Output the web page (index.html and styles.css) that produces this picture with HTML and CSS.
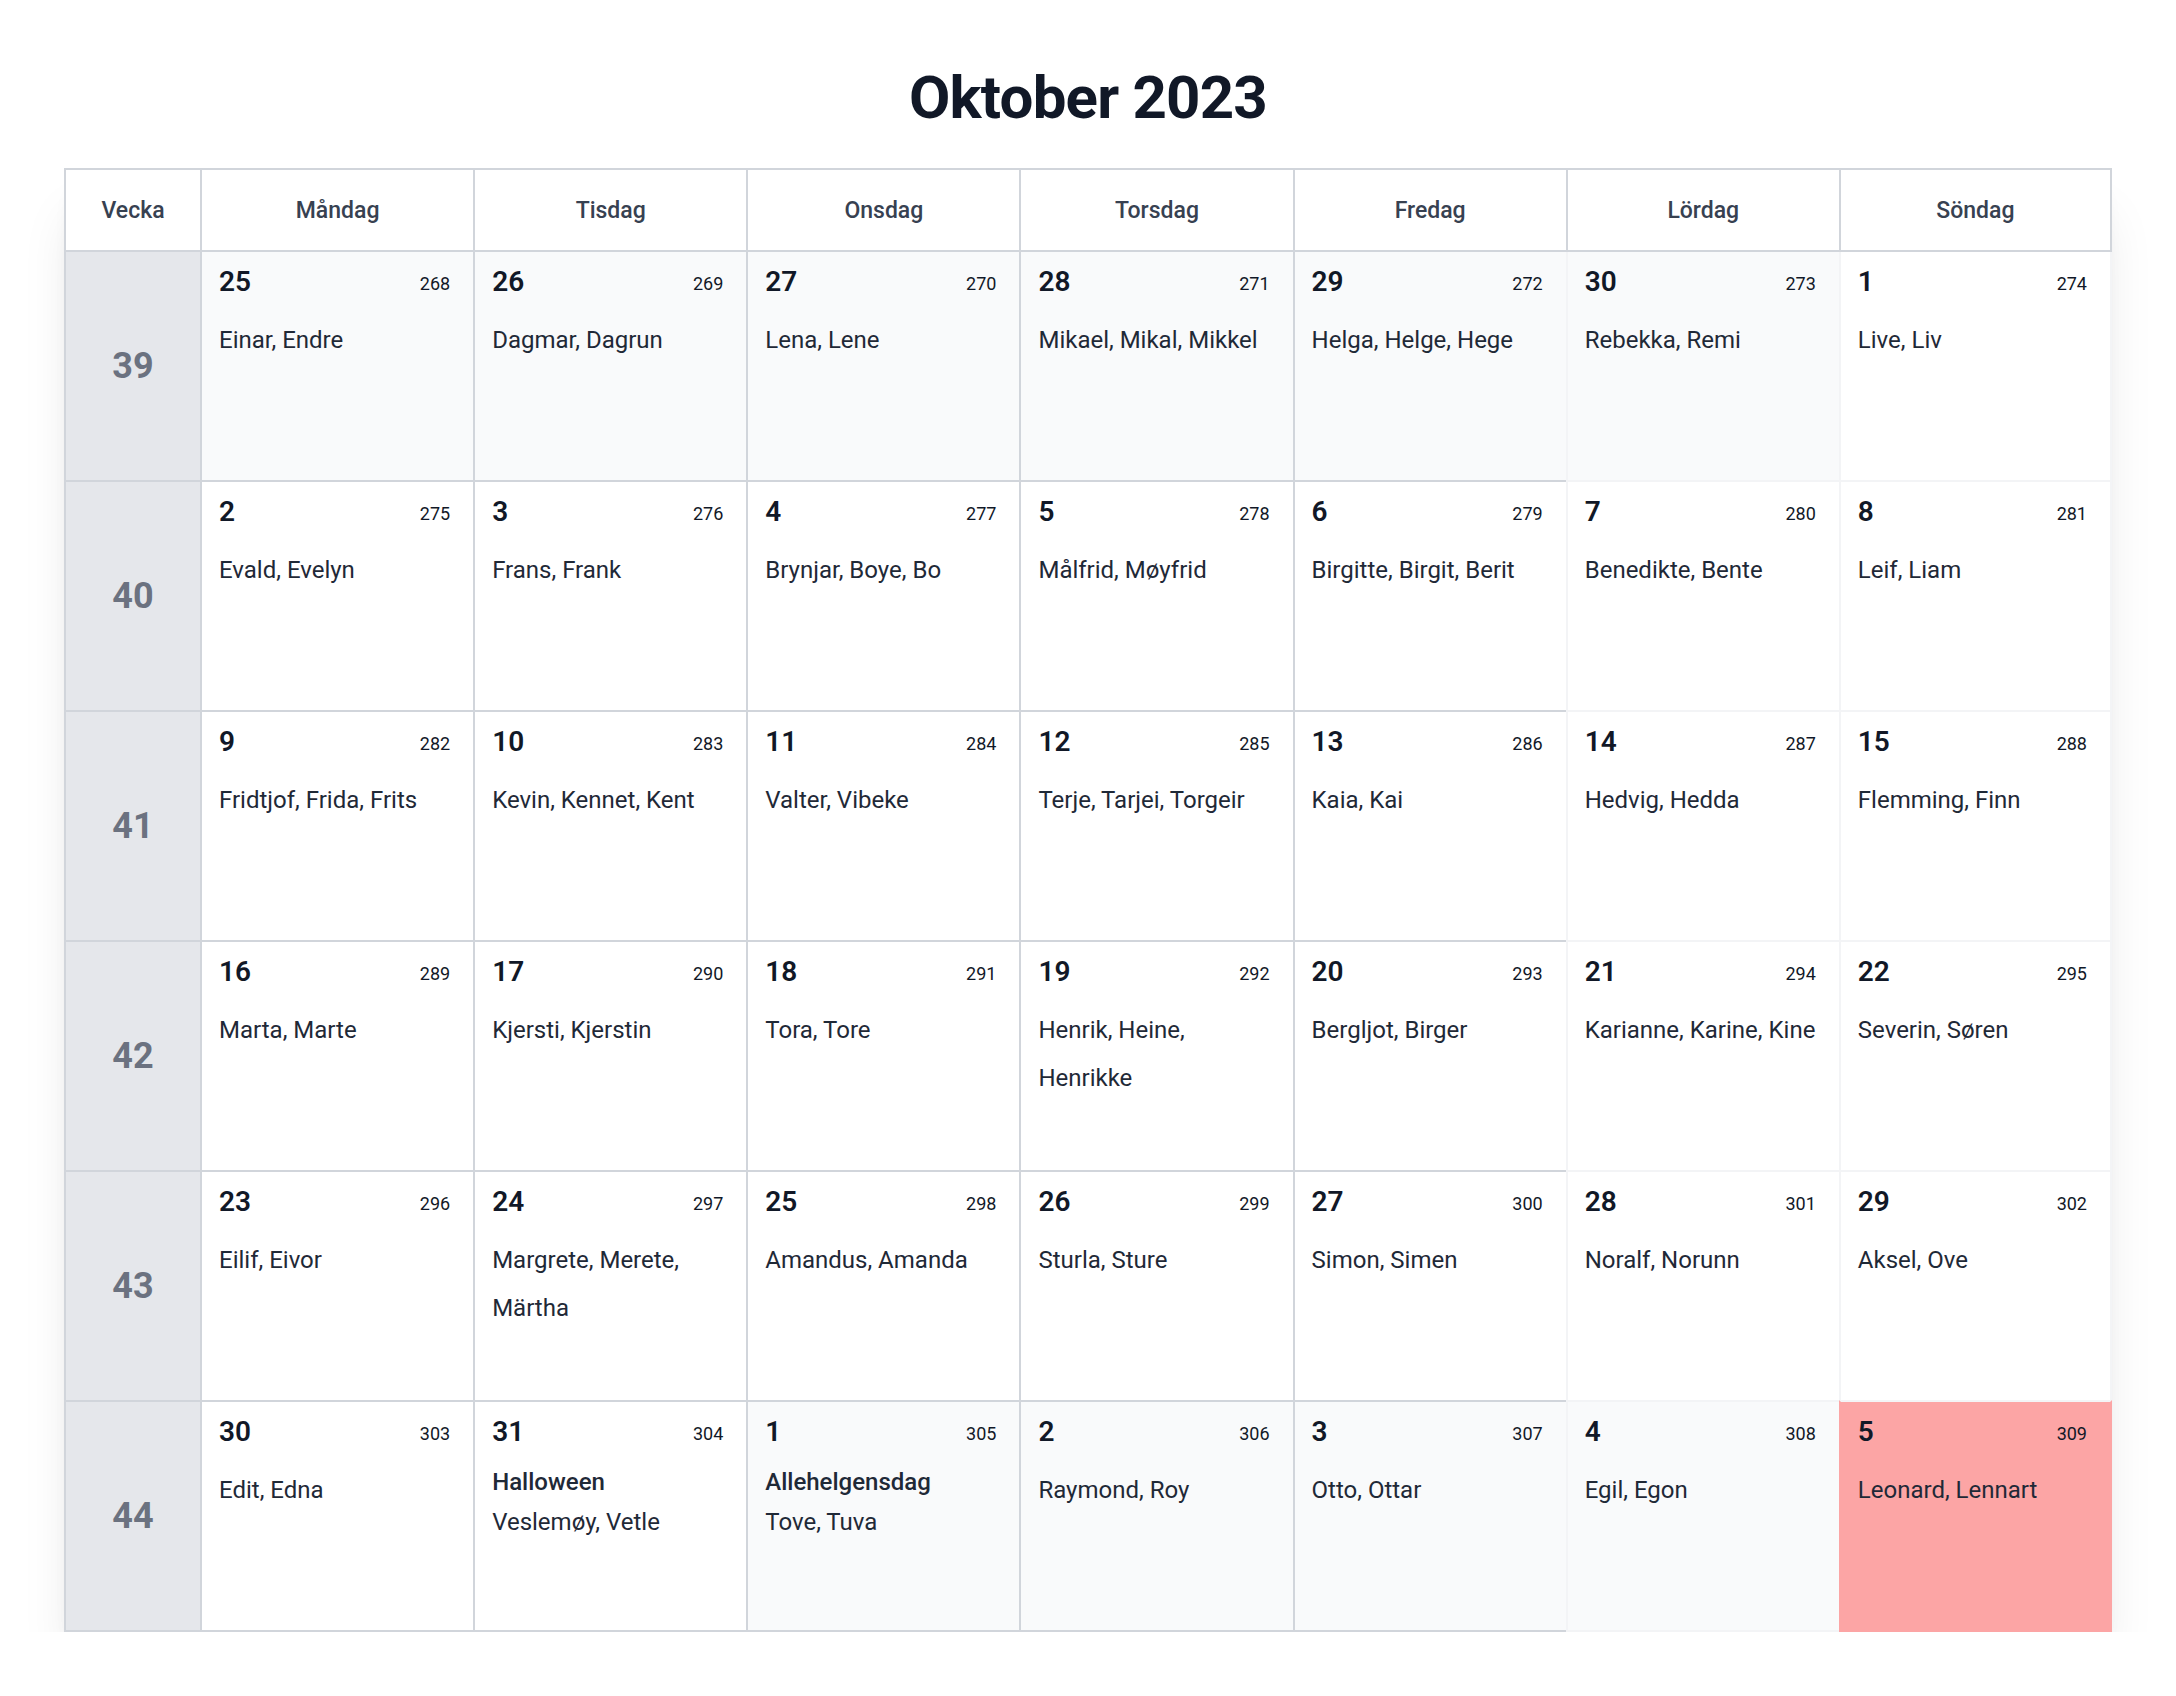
FILE: index.html
```html
<!DOCTYPE html>
<html lang="sv">
<head>
<meta charset="utf-8">
<title>Oktober 2023</title>
<link rel="stylesheet" href="styles.css">
</head>
<body>
<main class="page">
  <h1 class="title">Oktober 2023</h1>
  <div class="cal">
    <div class="hd">Vecka</div>
    <div class="hd">Måndag</div>
    <div class="hd">Tisdag</div>
    <div class="hd">Onsdag</div>
    <div class="hd">Torsdag</div>
    <div class="hd">Fredag</div>
    <div class="hd">Lördag</div>
    <div class="hd end">Söndag</div>

    <div class="wk first">39</div>
    <div class="day first out"><div class="top"><span class="num">25</span><span class="doy">268</span></div><p class="names">Einar, Endre</p></div>
    <div class="day first out"><div class="top"><span class="num">26</span><span class="doy">269</span></div><p class="names">Dagmar, Dagrun</p></div>
    <div class="day first out"><div class="top"><span class="num">27</span><span class="doy">270</span></div><p class="names">Lena, Lene</p></div>
    <div class="day first out"><div class="top"><span class="num">28</span><span class="doy">271</span></div><p class="names">Mikael, Mikal, Mikkel</p></div>
    <div class="day first out"><div class="top"><span class="num">29</span><span class="doy">272</span></div><p class="names">Helga, Helge, Hege</p></div>
    <div class="day first out we"><div class="top"><span class="num">30</span><span class="doy">273</span></div><p class="names">Rebekka, Remi</p></div>
    <div class="day first we end"><div class="top"><span class="num">1</span><span class="doy">274</span></div><p class="names">Live, Liv</p></div>

    <div class="wk">40</div>
    <div class="day"><div class="top"><span class="num">2</span><span class="doy">275</span></div><p class="names">Evald, Evelyn</p></div>
    <div class="day"><div class="top"><span class="num">3</span><span class="doy">276</span></div><p class="names">Frans, Frank</p></div>
    <div class="day"><div class="top"><span class="num">4</span><span class="doy">277</span></div><p class="names">Brynjar, Boye, Bo</p></div>
    <div class="day"><div class="top"><span class="num">5</span><span class="doy">278</span></div><p class="names">Målfrid, Møyfrid</p></div>
    <div class="day"><div class="top"><span class="num">6</span><span class="doy">279</span></div><p class="names">Birgitte, Birgit, Berit</p></div>
    <div class="day we"><div class="top"><span class="num">7</span><span class="doy">280</span></div><p class="names">Benedikte, Bente</p></div>
    <div class="day we end"><div class="top"><span class="num">8</span><span class="doy">281</span></div><p class="names">Leif, Liam</p></div>

    <div class="wk">41</div>
    <div class="day"><div class="top"><span class="num">9</span><span class="doy">282</span></div><p class="names">Fridtjof, Frida, Frits</p></div>
    <div class="day"><div class="top"><span class="num">10</span><span class="doy">283</span></div><p class="names">Kevin, Kennet, Kent</p></div>
    <div class="day"><div class="top"><span class="num">11</span><span class="doy">284</span></div><p class="names">Valter, Vibeke</p></div>
    <div class="day"><div class="top"><span class="num">12</span><span class="doy">285</span></div><p class="names">Terje, Tarjei, Torgeir</p></div>
    <div class="day"><div class="top"><span class="num">13</span><span class="doy">286</span></div><p class="names">Kaia, Kai</p></div>
    <div class="day we"><div class="top"><span class="num">14</span><span class="doy">287</span></div><p class="names">Hedvig, Hedda</p></div>
    <div class="day we end"><div class="top"><span class="num">15</span><span class="doy">288</span></div><p class="names">Flemming, Finn</p></div>

    <div class="wk">42</div>
    <div class="day"><div class="top"><span class="num">16</span><span class="doy">289</span></div><p class="names">Marta, Marte</p></div>
    <div class="day"><div class="top"><span class="num">17</span><span class="doy">290</span></div><p class="names">Kjersti, Kjerstin</p></div>
    <div class="day"><div class="top"><span class="num">18</span><span class="doy">291</span></div><p class="names">Tora, Tore</p></div>
    <div class="day"><div class="top"><span class="num">19</span><span class="doy">292</span></div><p class="names">Henrik, Heine, Henrikke</p></div>
    <div class="day"><div class="top"><span class="num">20</span><span class="doy">293</span></div><p class="names">Bergljot, Birger</p></div>
    <div class="day we"><div class="top"><span class="num">21</span><span class="doy">294</span></div><p class="names">Karianne, Karine, Kine</p></div>
    <div class="day we end"><div class="top"><span class="num">22</span><span class="doy">295</span></div><p class="names">Severin, Søren</p></div>

    <div class="wk">43</div>
    <div class="day"><div class="top"><span class="num">23</span><span class="doy">296</span></div><p class="names">Eilif, Eivor</p></div>
    <div class="day"><div class="top"><span class="num">24</span><span class="doy">297</span></div><p class="names">Margrete, Merete, Märtha</p></div>
    <div class="day"><div class="top"><span class="num">25</span><span class="doy">298</span></div><p class="names">Amandus, Amanda</p></div>
    <div class="day"><div class="top"><span class="num">26</span><span class="doy">299</span></div><p class="names">Sturla, Sture</p></div>
    <div class="day"><div class="top"><span class="num">27</span><span class="doy">300</span></div><p class="names">Simon, Simen</p></div>
    <div class="day we"><div class="top"><span class="num">28</span><span class="doy">301</span></div><p class="names">Noralf, Norunn</p></div>
    <div class="day we end"><div class="top"><span class="num">29</span><span class="doy">302</span></div><p class="names">Aksel, Ove</p></div>

    <div class="wk last">44</div>
    <div class="day last"><div class="top"><span class="num">30</span><span class="doy">303</span></div><p class="names">Edit, Edna</p></div>
    <div class="day last"><div class="top"><span class="num">31</span><span class="doy">304</span></div><p class="holiday">Halloween</p><p class="names">Veslemøy, Vetle</p></div>
    <div class="day last out"><div class="top"><span class="num">1</span><span class="doy">305</span></div><p class="holiday">Allehelgensdag</p><p class="names">Tove, Tuva</p></div>
    <div class="day last out"><div class="top"><span class="num">2</span><span class="doy">306</span></div><p class="names">Raymond, Roy</p></div>
    <div class="day last out"><div class="top"><span class="num">3</span><span class="doy">307</span></div><p class="names">Otto, Ottar</p></div>
    <div class="day last out we"><div class="top"><span class="num">4</span><span class="doy">308</span></div><p class="names">Egil, Egon</p></div>
    <div class="day last we end today"><div class="top"><span class="num">5</span><span class="doy">309</span></div><p class="names">Leonard, Lennart</p></div>
  </div>
</main>
</body>
</html>
```

FILE: styles.css
```css
* {
  box-sizing: border-box;
}

html, body {
  margin: 0;
  padding: 0;
  background: #ffffff;
}

body {
  font-family: Roboto, "Liberation Sans", Arial, sans-serif;
  color: #111827;
}

.page {
  padding: 62px 64px 0;
}

.title {
  margin: 0 0 34px;
  font-size: 60px;
  line-height: 72px;
  font-weight: 700;
  letter-spacing: -0.8px;
  text-align: center;
  color: #111827;
}

.cal {
  display: grid;
  grid-template-columns: 136px repeat(7, 1fr);
  grid-template-rows: 84px 228px repeat(4, 230px) 232px;
  background: #ffffff;
  box-shadow: 0 40px 50px -10px rgba(0, 0, 0, 0.1), 0 16px 20px -12px rgba(0, 0, 0, 0.1);
}

.hd {
  display: flex;
  align-items: center;
  justify-content: center;
  border-top: 2px solid #d1d5db;
  border-left: 2px solid #d1d5db;
  border-bottom: 2px solid #d1d5db;
  font-size: 23px;
  font-weight: 500;
  color: #374151;
  background: #ffffff;
}

.hd.end {
  border-right: 2px solid #d1d5db;
}

.wk {
  display: flex;
  align-items: center;
  justify-content: center;
  background: #e5e7eb;
  border-left: 2px solid #d1d5db;
  border-top: 2px solid #d1d5db;
  font-size: 36px;
  font-weight: 700;
  color: #6b7280;
}

.wk.first,
.day.first {
  border-top: 0;
}

.wk.last {
  border-bottom: 2px solid #d1d5db;
}

.day {
  display: flex;
  flex-direction: column;
  padding: 16px 16px 0 17px;
  border-left: 2px solid #d1d5db;
  border-top: 2px solid #d1d5db;
  background: #ffffff;
  min-width: 0;
}

.day.last {
  border-bottom: 2px solid #d1d5db;
}

.day.out {
  background: #f9fafb;
}

.day.we {
  border-left-color: #f3f4f6;
  border-top-color: #f3f4f6;
  border-bottom-color: #f3f4f6;
}

.day.end {
  border-right: 2px solid #f3f4f6;
}

.day.today {
  background: #fca5a5;
  border-left-color: #fca5a5;
  border-right-color: #fca5a5;
  border-bottom-color: #fca5a5;
}

.top {
  display: flex;
  justify-content: space-between;
  align-items: flex-start;
  margin-bottom: 20px;
}

.num {
  font-size: 28px;
  line-height: 28px;
  font-weight: 600;
  color: #111827;
}

.doy {
  margin-top: 7px;
  margin-right: 7px;
  font-size: 18px;
  line-height: 18px;
  color: #111827;
}

.holiday {
  margin: 0;
  font-size: 24px;
  line-height: 32px;
  font-weight: 500;
  color: #1f2937;
}

.names {
  margin: 0;
  font-size: 24px;
  line-height: 48px;
  color: #1f2937;
}
```
